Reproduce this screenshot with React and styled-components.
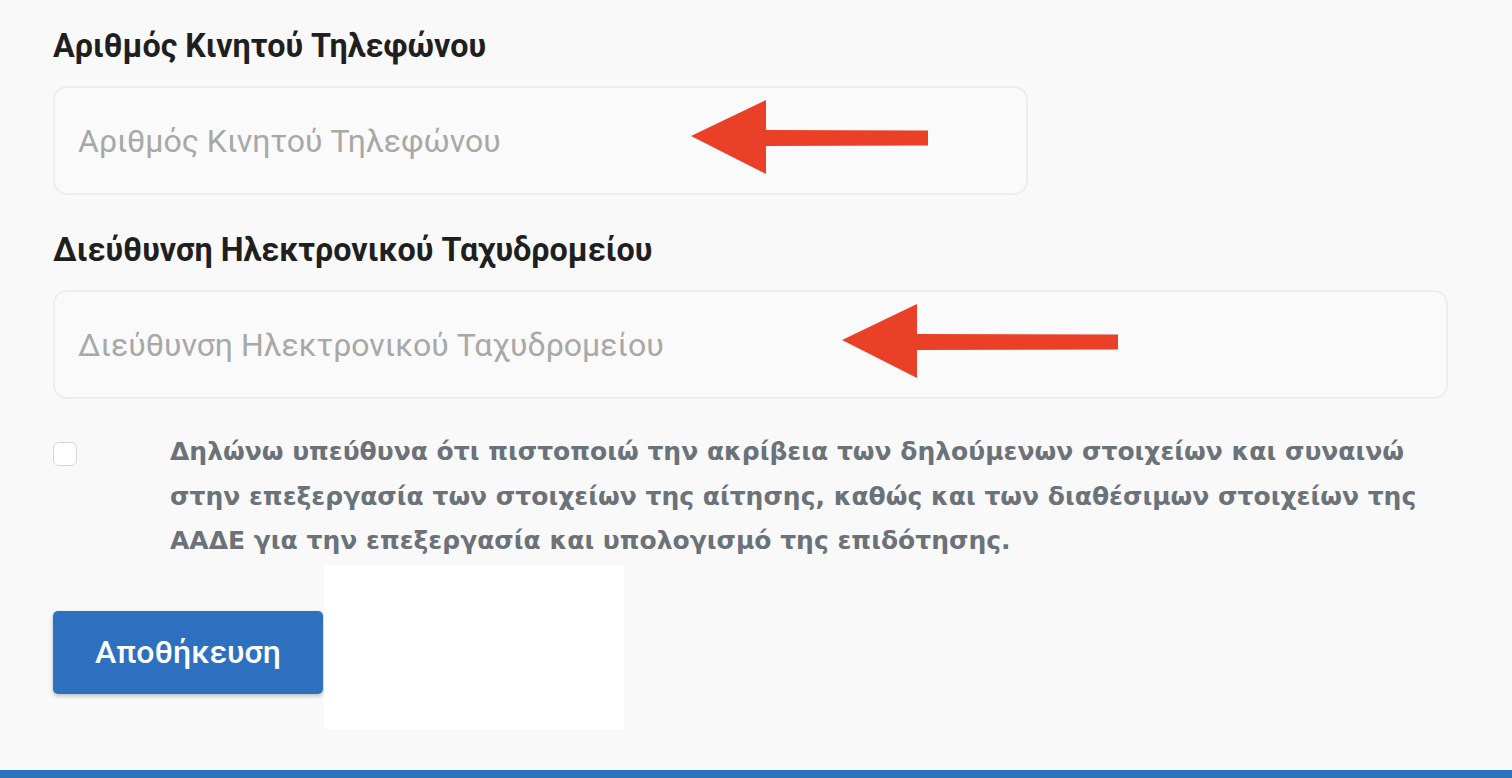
import styled, { createGlobalStyle } from 'styled-components';

const GlobalStyle = createGlobalStyle`
  html, body {
    margin: 0;
    padding: 0;
    background: #f9f9f9;
    font-family: Roboto, "Noto Sans", "DejaVu Sans", sans-serif;
  }
`;

const Page = styled.div`
  position: relative;
  height: 778px;
  overflow: hidden;
  background: #f9f9f9;
`;

const Form = styled.div`
  display: flex;
  flex-direction: column;
  padding: 26px 0 0 53px;
`;

const Label = styled.label`
  display: block;
  font-size: 32.3px;
  font-weight: 700;
  color: #1f1f1f;
  line-height: 40px;
  margin-bottom: ${(p) => p.$gap}px;
`;

const Field = styled.div`
  position: relative;
  width: ${(p) => p.$width}px;
  height: 109px;
  box-sizing: border-box;
  border: 2px solid #ededed;
  border-radius: 14px;
  background: #fafafa;
  margin-bottom: ${(p) => p.$after}px;
`;

const Input = styled.input`
  width: 100%;
  height: 100%;
  box-sizing: border-box;
  border: none;
  background: transparent;
  padding: 0 0 0 23px;
  font-family: inherit;
  font-size: 32px;
  color: #333;
  outline: none;

  &::placeholder {
    color: #a8a8a8;
  }
`;

const Arrow = styled.svg`
  position: absolute;
  top: ${(p) => p.$top}px;
  left: ${(p) => p.$left}px;
  pointer-events: none;
`;

const Consent = styled.div`
  display: flex;
  align-items: flex-start;
  gap: 93px;
`;

const Box = styled.input.attrs({ type: 'checkbox' })`
  appearance: none;
  flex: none;
  width: 24px;
  height: 24px;
  margin: 5px 0 0 0;
  border: 1.5px solid #d6d6d6;
  border-radius: 6px;
  background: #fff;
`;

const Statement = styled.p`
  margin: -7px 0 0 0;
  width: 1285px;
  font-family: "DejaVu Sans", Verdana, sans-serif;
  font-size: 25px;
  font-weight: 700;
  line-height: 44.5px;
  color: #6b727a;
`;

const Actions = styled.div`
  display: flex;
  align-items: flex-start;
  margin-top: 1px;
`;

const SaveButton = styled.button`
  margin-top: 46px;
  width: 270px;
  height: 83px;
  border: none;
  border-radius: 5px;
  background: #2d70c0;
  color: #fff;
  font-family: inherit;
  font-size: 32px;
  font-weight: 500;
  box-shadow: 0 2px 4px rgba(0, 0, 0, 0.25);
`;

const Blank = styled.div`
  width: 300px;
  height: 164px;
  margin-left: 1px;
  background: #ffffff;
`;

const BottomBar = styled.div`
  position: absolute;
  left: 0;
  right: 0;
  bottom: 0;
  height: 8px;
  background: #2d70c0;
`;

function RedArrow({ top, left, length }) {
  return (
    <Arrow $top={top} $left={left} width={length} height={76} viewBox={`0 0 ${length} 76`}>
      <polygon
        fill="#ea4027"
        points={`0,36 75,0 75,30 ${length},30.5 ${length},45.5 75,46 75,74`}
      />
    </Arrow>
  );
}

export default function App() {
  return (
    <Page>
      <GlobalStyle />
      <Form>
        <Label $gap={20}>Αριθμός Κινητού Τηλεφώνου</Label>
        <Field $width={975} $after={35}>
          <Input placeholder="Αριθμός Κινητού Τηλεφώνου" />
          <RedArrow top={12} left={636} length={237} />
        </Field>
        <Label $gap={20}>Διεύθυνση Ηλεκτρονικού Ταχυδρομείου</Label>
        <Field $width={1395} $after={38}>
          <Input placeholder="Διεύθυνση Ηλεκτρονικού Ταχυδρομείου" />
          <RedArrow top={12} left={787} length={276} />
        </Field>
        <Consent>
          <Box />
          <Statement>
            Δηλώνω υπεύθυνα ότι πιστοποιώ την ακρίβεια των δηλούμενων στοιχείων και
            συναινώ στην επεξεργασία των στοιχείων της αίτησης, καθώς και των
            διαθέσιμων στοιχείων της ΑΑΔΕ για την επεξεργασία και υπολογισμό της
            επιδότησης.
          </Statement>
        </Consent>
        <Actions>
          <SaveButton>Αποθήκευση</SaveButton>
          <Blank />
        </Actions>
      </Form>
      <BottomBar />
    </Page>
  );
}
